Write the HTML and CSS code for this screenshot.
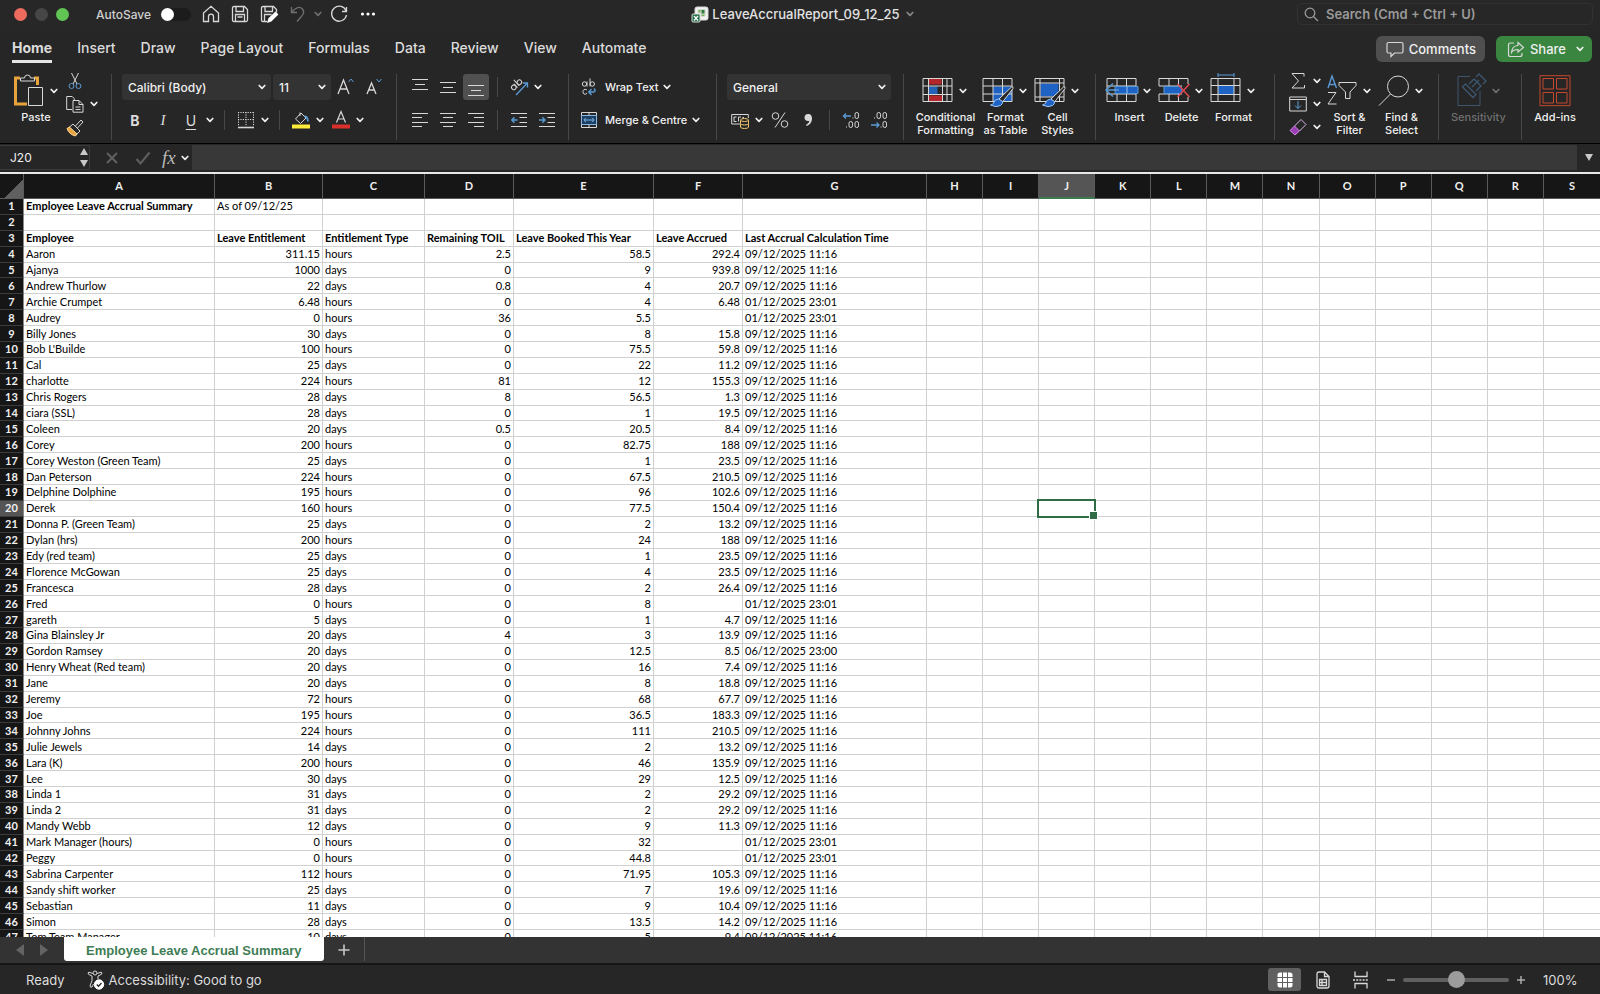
FILE: index.html
```html
<!DOCTYPE html>
<html lang="en">
<head>
  <meta charset="UTF-8" />
  <meta name="viewport" content="width=device-width, initial-scale=1.0"/>
  <title>LeaveAccrualReport_09_12_25</title>
  <link rel="stylesheet" href="styles.css">
</head>
<body>

  <!-- shared chevron -->
  <svg class="defs" width="0" height="0" aria-hidden="true">
    <symbol id="chev" viewBox="0 0 12 12"><path d="M3.2 4.5 6 7.4 8.8 4.5" fill="none" stroke="currentColor" stroke-width="1.7" stroke-linecap="round" stroke-linejoin="round"/></symbol>
  </svg>

  <header class="titlebar">
    <div class="title-left">
      <div class="lights"><span class="light red"></span><span class="light grey"></span><span class="light green"></span></div>
      <label class="autosave">AutoSave <input type="checkbox" class="switch"></label>
      <div class="quick">
        <button aria-label="Home"><svg width="18" height="18" viewBox="0 0 18 18"><path d="M1.5 8 9 1.3 16.5 8v8.500h-5V11.500c0-3.200-5-3.200-5 0v5h-5z"/></svg></button>
        <button aria-label="Save"><svg width="18" height="18" viewBox="0 0 18 18"><path d="M1.500 3q0-1.500 1.500-1.500h10.500l3 3v10.500q0 1.500-1.500 1.500h-12q-1.500 0-1.500-1.500zM5 1.500v5h7.500v-5M4.500 16.500v-7h9v7M6.500 12h5"/></svg></button>
        <button aria-label="Save as"><svg width="18" height="18" viewBox="0 0 18 18"><path d="M7 16.500h-4q-1.500 0-1.500-1.500v-12q0-1.500 1.500-1.500h10.500l3 3v3M5 1.500v5h7.500v-5M4.500 16v-6.500h7"/><path d="m8 17 1-3.500 6.500-6 2 2-6.500 6.500z" fill="#fff" stroke="#fff"/></svg></button>
        <button class="dim with-chev" aria-label="Undo"><svg width="18" height="18" viewBox="0 0 18 18"><path d="M2.500 2v5.500h5.500M2.500 7.500C7 1.500 11 1.500 13.500 4c2.500 3 .5 6-2 8.500L8 16.500"/></svg><svg class="chev"><use href="#chev"/></svg></button>
        <button aria-label="Redo"><svg width="18" height="18" viewBox="0 0 18 18"><path d="M16.500 2v4.500h-4.500M16.200 6.200A7.500 7.500 0 1 0 16.500 10"/></svg></button>
        <button aria-label="More"><svg width="18" height="18" viewBox="0 0 18 18"><g fill="#fff" stroke="none"><circle cx="3.500" cy="9" r="1.600"/><circle cx="9" cy="9" r="1.600"/><circle cx="14.500" cy="9" r="1.600"/></g></svg></button>
      </div>
    </div>
    <button class="doc-title">
      <svg width="16" height="16" viewBox="0 0 16 16"><rect x="3" y="1" width="13" height="13" rx="2" fill="#f0f4ee"/><path d="M6 3.500h7v7H9V7H6z" fill="#75b857"/><path d="M9 3.500h4V8H9z" fill="#2f7d3c"/><rect y="8" width="8" height="8" rx="1" fill="#1e7145"/><path d="m2 10 4 4.500m0-4.500-4 4.500" stroke="#fff" stroke-width="1.300"/></svg>
      <span>LeaveAccrualReport_09_12_25</span>
      <svg class="chev dim"><use href="#chev"/></svg>
    </button>
    <div class="title-right">
      <label class="search">
        <svg width="15" height="15" viewBox="0 0 15 15"><circle cx="6" cy="6" r="4.800"/><path d="m9.500 9.500 4.500 4.500"/></svg>
        <input type="text" placeholder="Search (Cmd + Ctrl + U)" aria-label="Search">
      </label>
    </div>
  </header>

  <nav class="menu">
    <a href="#" class="active">Home</a>
    <a href="#">Insert</a>
    <a href="#">Draw</a>
    <a href="#">Page Layout</a>
    <a href="#">Formulas</a>
    <a href="#">Data</a>
    <a href="#">Review</a>
    <a href="#">View</a>
    <a href="#">Automate</a>
    <div class="menu-actions">
      <button class="pill"><svg width="18" height="17" viewBox="0 0 18 17"><path d="M2.500 1.500h13q1.500 0 1.500 1.500v7.500q0 1.500-1.500 1.500H8.500l-3.500 3.500V12H2.500Q1 12 1 10.500V3q0-1.500 1.500-1.500z"/></svg>Comments</button>
      <button class="pill share"><svg width="18" height="17" viewBox="0 0 18 17"><path d="M7 2H3.500Q1.500 2 1.500 4v9.500q0 2 2 2H13q2 0 2-2V12M11 1.500l5.500 5-5.500 4.500V8.500Q6.500 8.300 4.500 11.500 4.800 5 11 4.500z"/></svg>Share<svg class="chev"><use href="#chev"/></svg></button>
    </div>
  </nav>

  <div class="ribbon">
    <section class="group g-clip">
      <button class="big">
        <span class="pic"><svg width="32" height="33" viewBox="0 0 32 33"><path d="M7 4H2.500v26H14M21 4h3.500v7" fill="none" stroke="#e8a33d" stroke-width="3"/><path d="M7.500 7V4h4q0-3 3-3t3 3h4v3z"/><path d="M15.500 13.500h14v18h-14z" fill="#262626"/></svg><svg class="chev"><use href="#chev"/></svg></span>
        Paste
      </button>
      <div class="stack">
        <button class="drop" aria-label="Cut"><svg width="18" height="18" viewBox="0 0 18 18"><path d="M5.500 1 11 12M12.500 1 7 12"/><g stroke="#5b9bd5"><circle cx="5.500" cy="14" r="2.500"/><circle cx="12.500" cy="14" r="2.500"/></g></svg></button>
        <button class="drop" aria-label="Copy"><svg width="18" height="18" viewBox="0 0 18 18"><path d="M6 14.500H.7V1.500h5.500l2 2V5M7 5.500h6l4 4v7.700H7zM13 5.500v4h4M9.500 12h5M9.500 14.500h5"/></svg><svg class="chev"><use href="#chev"/></svg></button>
        <button class="drop" aria-label="Format painter"><svg width="18" height="18" viewBox="0 0 18 18"><path d="m3 9.500 7.500 7L14 13 7 6z" fill="#262626"/><path d="M1 10.500 3.500 9l7.500 7-1.500 2Q3 16.500 1 10.500z" fill="#e8a33d" stroke="#ffd79a"/><path d="m9.500 8 5.500-6 2 2-5.500 6"/></svg></button>
      </div>
    </section>

    <section class="group g-font">
      <div class="row">
        <label class="combo font-name"><select aria-label="Font"><option>Calibri (Body)</option></select><svg class="chev"><use href="#chev"/></svg></label>
        <label class="combo font-size"><select aria-label="Font size"><option>11</option></select><svg class="chev"><use href="#chev"/></svg></label>
        <button class="tool" aria-label="Increase font size"><svg width="20" height="20" viewBox="0 0 20 20"><path d="m2 17 5.500-14L13 17M4 12h7" stroke-width="1.300"/><path d="m12.500 5 2.500-3 2.500 3" stroke="#5b9bd5"/></svg></button>
        <button class="tool" aria-label="Decrease font size"><svg width="20" height="20" viewBox="0 0 20 20"><path d="m3 17 4.500-11L12 17M4.700 13h5.600" stroke-width="1.300"/><path d="m12.500 2 2.500 3 2.500-3" stroke="#5b9bd5"/></svg></button>
      </div>
      <div class="row">
        <button class="tool letter bold">B</button>
        <button class="tool letter italic">I</button>
        <button class="drop"><span class="letter under">U</span><svg class="chev"><use href="#chev"/></svg></button>
        <span class="sep"></span>
        <button class="drop" aria-label="Borders"><svg width="18" height="18" viewBox="0 0 18 18"><path d="M1.500 1v14M16.500 1v14M9 1v14M1 1.500h16M1 8.500h16" stroke-dasharray="1.200 1.200"/><path d="M1 16.500h16" stroke-width="1.600"/></svg><svg class="chev"><use href="#chev"/></svg></button>
        <span class="sep"></span>
        <button class="drop" aria-label="Fill colour"><svg width="18" height="18" viewBox="0 0 18 18"><path d="m3.500 8 5.500-6 5 5-5.500 5.500zM8 5V1.500"/><path d="M12.500 5.500q3-.5 3.500 5" stroke="#5b9bd5" stroke-width="1.800"/><path d="M0 13.500h18v4H0z" fill="#ffeb3b" stroke="none"/></svg><svg class="chev"><use href="#chev"/></svg></button>
        <button class="drop" aria-label="Font colour"><svg width="18" height="18" viewBox="0 0 18 18"><path d="m4.500 11.500 4.500-11 4.500 11M6 8h6" stroke-width="1.200"/><path d="M0 13.500h18v4H0z" fill="#d9302c" stroke="none"/></svg><svg class="chev"><use href="#chev"/></svg></button>
      </div>
    </section>

    <section class="group g-align">
      <div class="row">
        <button class="tool" aria-label="Top align"><svg width="16" height="18" viewBox="0 0 16 18"><path d="M0 1.500h16M3 6.500h10M0 11.500h16"/></svg></button>
        <button class="tool" aria-label="Middle align"><svg width="16" height="18" viewBox="0 0 16 18"><path d="M0 4.500h16M3 9.500h10M0 14.500h16"/></svg></button>
        <button class="tool on" aria-label="Bottom align"><svg width="16" height="18" viewBox="0 0 16 18"><path d="M0 7.500h16M3 12.500h10M0 17.500h16"/></svg></button>
        <span class="sep"></span>
        <button class="drop" aria-label="Orientation"><svg width="19" height="18" viewBox="0 0 19 18"><g transform="rotate(-42 6 8)"><circle cx="3.500" cy="7.500" r="2.300"/><path d="M6 5v5.200M8.500 2v8.200"/><circle cx="11" cy="7.500" r="2.300"/></g><path d="M6 17 17.500 5M13 5h4.500v4.500" stroke="#5b9bd5" stroke-width="1.300"/></svg><svg class="chev"><use href="#chev"/></svg></button>
      </div>
      <div class="row">
        <button class="tool" aria-label="Align left"><svg width="16" height="16" viewBox="0 0 16 16"><path d="M0 1.500h16M0 5.500h10M0 10.500h16M0 14.500h10"/></svg></button>
        <button class="tool" aria-label="Centre"><svg width="16" height="16" viewBox="0 0 16 16"><path d="M0 1.500h16M3 5.500h10M0 10.500h16M3 14.500h10"/></svg></button>
        <button class="tool" aria-label="Align right"><svg width="16" height="16" viewBox="0 0 16 16"><path d="M0 1.500h16M6 5.500h10M0 10.500h16M6 14.500h10"/></svg></button>
        <span class="sep"></span>
        <button class="tool" aria-label="Decrease indent"><svg width="16" height="16" viewBox="0 0 16 16"><path d="M0 1.500h16M8.500 5.500H16M8.500 10.500H16M0 14.500h16"/><path d="M6.500 8H1M3.500 5.200.8 8l2.700 2.800" stroke="#5b9bd5" stroke-width="1.400"/></svg></button>
        <button class="tool" aria-label="Increase indent"><svg width="16" height="16" viewBox="0 0 16 16"><path d="M0 1.500h16M8.500 5.500H16M8.500 10.500H16M0 14.500h16"/><path d="M0 8h5.500M3.300 5.200 6 8l-2.700 2.800" stroke="#5b9bd5" stroke-width="1.400"/></svg></button>
      </div>
    </section>

    <section class="group g-wrap">
      <div class="row">
        <button class="wide"><svg width="18" height="18" viewBox="0 0 18 18"><circle cx="4.500" cy="6" r="2.200"/><path d="M7 3.500v5M10 .5v8M7 15.500q-4 2-4-1.700t4-1.900"/><circle cx="12.300" cy="6" r="2.200"/><path d="M14 10.500q2.500 3-.5 3.500H9M11.500 11 8.700 14l2.800 3" stroke="#5b9bd5" stroke-width="1.400"/></svg>Wrap Text<svg class="chev"><use href="#chev"/></svg></button>
      </div>
      <div class="row">
        <button class="wide"><svg width="18" height="18" viewBox="0 0 18 18"><path d="M1.500 1.500h15v15h-15zM9 1.500v3M9 13.500v3"/><path d="M1.500 4.500h15v9h-15z" fill="#1d3f60" stroke="#8ab8e6"/><path d="M4 9h10M6 6.800 3.800 9 6 11.200M12 6.800 14.200 9 12 11.200" stroke="#7db8ee"/></svg>Merge &amp; Centre<svg class="chev"><use href="#chev"/></svg></button>
      </div>
    </section>

    <section class="group g-number">
      <div class="row">
        <label class="combo num-format"><select aria-label="Number format"><option>General</option></select><svg class="chev"><use href="#chev"/></svg></label>
      </div>
      <div class="row">
        <button class="drop" aria-label="Accounting format"><svg width="18" height="18" viewBox="0 0 18 18"><path d="M9 13H.7V3.500h16.600V7M5.500 6H3v4.500h2.500M10 6H7.500v4.500M13 6.500h-1.500"/><g fill="#262626" stroke="#f2c66d"><path d="M9.500 9v7q0 1.500 4 1.500t4-1.500V9"/><ellipse cx="13.500" cy="9" rx="4" ry="1.500"/><path d="M9.500 12.500q0 1.500 4 1.500t4-1.500"/></g></svg><svg class="chev"><use href="#chev"/></svg></button>
        <button class="tool" aria-label="Percent style"><svg width="18" height="18" viewBox="0 0 18 18"><circle cx="4.500" cy="5" r="3.300"/><circle cx="13.500" cy="13" r="3.300"/><path d="M14 1.500 4 16.500"/></svg></button>
        <button class="tool" aria-label="Comma style"><svg width="18" height="18" viewBox="0 0 18 18"><path d="M9 3c3 0 4 2 4 4.500 0 4-2.500 6.500-5.500 7.500l-.5-1q3-1.500 3.500-4.200C7.500 10.500 5.500 9 5.500 6.500 5.500 4.500 7 3 9 3z" fill="#d8d8d8" stroke="none"/></svg></button>
        <span class="sep"></span>
        <button class="tool" aria-label="Increase decimal"><svg width="18" height="18" viewBox="0 0 18 18"><g><rect x="13" y="1.500" width="3.500" height="6" rx="1.700"/><rect x="7" y="10.500" width="3.500" height="6" rx="1.700"/><rect x="13" y="10.500" width="3.500" height="6" rx="1.700"/><path d="M4 16h1M10.500 7h1"/></g><path d="M9 5H1.500M4 2.500 1.500 5 4 7.500" stroke="#5b9bd5" stroke-width="1.300"/></svg></button>
        <button class="tool" aria-label="Decrease decimal"><svg width="18" height="18" viewBox="0 0 18 18"><g><rect x="7" y="1.500" width="3.500" height="6" rx="1.700"/><rect x="13" y="1.500" width="3.500" height="6" rx="1.700"/><rect x="13" y="10.500" width="3.500" height="6" rx="1.700"/><path d="M4 7h1M10.500 16h1"/></g><path d="M1 14h8M6.500 11.500 9 14l-2.500 2.500" stroke="#5b9bd5" stroke-width="1.300"/></svg></button>
      </div>
    </section>

    <section class="group g-styles">
      <button class="big cond">
        <span class="pic"><svg width="32" height="32" viewBox="0 0 32 32"><path d="M6.500 3.500h13v6h-13zM6.500 20.500h14v6h-14z" fill="#b3262b" stroke="none"/><path d="M6.500 11.500h9v8h-9z" fill="#2463b8" stroke="none"/><path d="M1 3.500h29v23H1zM1 11h29M1 19.500h29M6.500 3.500v23M20.500 3.500v23M25 3.500v23"/></svg><svg class="chev"><use href="#chev"/></svg></span>
        Conditional<br>Formatting
      </button>
      <button class="big">
        <span class="pic"><svg width="32" height="32" viewBox="0 0 32 32"><path d="M11 11.500h19v15H11z" fill="#1e63c4" stroke="none"/><path d="M1 3.500h29v23H1zM1 11h29M1 19h29M11 3.500v23M20.500 3.500v23"/><path d="M29.500 12 17 24l3.500 3L31 13.500q.5-2.500-1.500-1.500z" fill="#262626"/><path d="M16.500 24q-4 .5-5 4-1 2-3 2 6 3 10 .5 2.500-1.500 2-4z" fill="#1e63c4" stroke="#9cc8f5"/></svg><svg class="chev"><use href="#chev"/></svg></span>
        Format<br>as Table
      </button>
      <button class="big">
        <span class="pic"><svg width="32" height="32" viewBox="0 0 32 32"><path d="M6.500 8.500h18v13h-18z" fill="#1e63c4" stroke="none"/><path d="M1 3.500h29v23H1zM1 8h29M1 22h29M6 3.500v23M25.500 3.500v23"/><path d="M29.500 12 17 24l3.500 3L31 13.500q.5-2.500-1.500-1.500z" fill="#262626"/><path d="M16.500 24q-4 .5-5 4-1 2-3 2 6 3 10 .5 2.500-1.500 2-4z" fill="#1e63c4" stroke="#9cc8f5"/></svg><svg class="chev"><use href="#chev"/></svg></span>
        Cell<br>Styles
      </button>
    </section>

    <section class="group g-cells">
      <button class="big">
        <span class="pic"><svg width="32" height="32" viewBox="0 0 32 32"><path d="M1 3.500h29v23H1zM11 3.500v23M20.500 3.500v23M1 11h29M1 19h29"/><path d="M9 11.500h23v7H9z" fill="#1e63c4" stroke="#5b9bd5"/><path d="M21 11.500v7" stroke="#9cc8f5"/><path d="M13 15H0M7 8.500 0 15l7 6.500" stroke="#5b9bd5" stroke-width="1.400"/></svg><svg class="chev"><use href="#chev"/></svg></span>
        Insert
      </button>
      <button class="big">
        <span class="pic"><svg width="32" height="32" viewBox="0 0 32 32"><path d="M30 9V3.500H1V11h29M1 19h29v7.500H1V19M11 3.500v23M20.500 3.500v23"/><path d="M6 11.500h18v7H6z" fill="#1e63c4" stroke="#5b9bd5"/><path d="M24 10h8v12h-8z" fill="#262626" stroke="none"/><path d="m19.500 9 12 13M31.500 9l-12 13" stroke="#e0484d" stroke-width="1.500"/></svg><svg class="chev"><use href="#chev"/></svg></span>
        Delete
      </button>
      <button class="big">
        <span class="pic"><svg width="32" height="32" viewBox="0 0 32 32"><path d="M8 10.500h16v9H8z" fill="#1e63c4" stroke="none"/><path d="M1 3.500h29v23H1zM1 10.500h29M1 19.500h29M8 3.500v23M24 3.500v23"/><path d="M8 0h16M8-2v4M24-2v4" stroke="#5b9bd5"/></svg><svg class="chev"><use href="#chev"/></svg></span>
        Format
      </button>
    </section>

    <section class="group g-edit">
      <div class="stack">
        <button class="drop" aria-label="AutoSum"><svg width="18" height="18" viewBox="0 0 18 18"><path d="M15 4.500v-3H3L9.500 9 3 16h12.500v-3"/></svg><svg class="chev"><use href="#chev"/></svg></button>
        <button class="drop" aria-label="Fill"><svg width="18" height="18" viewBox="0 0 18 18"><path d="M.7 2h16.600v14H.7zM.7 4.500h16.600"/><path d="M9 6v7.500M6 10.500l3 3 3-3" stroke="#5b9bd5"/></svg><svg class="chev"><use href="#chev"/></svg></button>
        <button class="drop" aria-label="Clear"><svg width="18" height="18" viewBox="0 0 18 18"><path d="m5.500 8 6.500-6.500 5 5L10.500 13" stroke="#d9b8e8"/><path d="m1 12.500 4.500-4.500 5 5-4.500 4z" fill="#9b3fb5" stroke="#d38ae8"/></svg><svg class="chev"><use href="#chev"/></svg></button>
      </div>
      <button class="big">
        <span class="pic"><svg width="32" height="32" viewBox="0 0 32 32"><path d="M2 13 6 1l4.500 12M3.500 9.500H9" stroke="#5b9bd5" stroke-width="1.400"/><path d="M2 17.500h8L2 29h8.500M13 7.500h17v3l-6 6.500v6.500h-4.500V17L13 10.500z"/></svg><svg class="chev"><use href="#chev"/></svg></span>
        Sort &amp;<br>Filter
      </button>
      <button class="big">
        <span class="pic"><svg width="32" height="32" viewBox="0 0 32 32"><circle cx="20" cy="11.500" r="10.500"/><path d="M12.500 19 1 30.500"/></svg><svg class="chev"><use href="#chev"/></svg></span>
        Find &amp;<br>Select
      </button>
    </section>

    <section class="group g-sens">
      <button class="big" disabled>
        <span class="pic"><svg width="32" height="32" viewBox="0 0 32 32"><g stroke="#3c566e"><path d="M15 1.500H3v29h22V16"/><path d="m7.500 12 3-3L21 19.500l-3 3zM14 9l5-5 7 7-5 5M21 2l3-3 7 7-3 3M17 12l7-7" stroke-width="1.400"/></g></svg><svg class="chev"><use href="#chev"/></svg></span>
        Sensitivity
      </button>
    </section>

    <section class="group g-add">
      <button class="big">
        <span class="pic"><svg width="32" height="32" viewBox="0 0 32 32"><g stroke="#c4482c"><path d="M1 .7h30v30H1z"/><path d="M4 3.500h10.500V14H4zM17.500 3.500H28V14H17.500zM4 17.500h10.500V28H4zM17.500 17.500H28V28H17.500z"/></g></svg></span>
        Add-ins
      </button>
    </section>
  </div>

  <div class="formula-bar">
    <div class="name-box">
      <input type="text" value="J20" aria-label="Name box">
      <span class="spin"><i class="up"></i><i class="down"></i></span>
    </div>
    <div class="fx-tools">
      <button aria-label="Cancel"><svg width="16" height="16" viewBox="0 0 16 16"><path d="m3 3 10 10M13 3 3 13" stroke="#606060" stroke-width="2"/></svg></button>
      <button aria-label="Enter"><svg width="16" height="16" viewBox="0 0 16 16"><path d="m1.500 9 4 4.500 9-11" stroke="#606060" stroke-width="2"/></svg></button>
      <button class="fx"><span>fx</span><svg class="chev"><use href="#chev"/></svg></button>
    </div>
    <input type="text" class="formula" aria-label="Formula">
    <button class="expand" aria-label="Expand formula bar"><i class="down"></i></button>
  </div>

  <main class="sheet">
    <table id="grid">
      <colgroup>
        <col class="c-num"><col class="c-a"><col class="c-b"><col class="c-c"><col class="c-d"><col class="c-e"><col class="c-f"><col class="c-g">
        <col><col><col><col><col><col><col><col><col><col><col><col>
      </colgroup>
      <thead></thead>
      <tbody></tbody>
    </table>
  </main>

  <div class="sheet-tabs">
    <div class="arrows"><i class="left"></i><i class="right"></i></div>
    <button class="sheet-tab">Employee Leave Accrual Summary</button>
    <button class="add-sheet" aria-label="Add sheet"><svg width="12" height="12" viewBox="0 0 12 12"><path d="M6 .5v11M.5 6h11" stroke="#c8c8c8" stroke-width="1.600"/></svg></button>
  </div>

  <footer class="status">
    <span class="ready">Ready</span>
    <button class="access"><svg width="18" height="20" viewBox="0 0 18 20"><circle cx="8" cy="3" r="2"/><path d="M5.800 3.500 2 2.200Q.3 2.500 1.500 4.300L5 6v4.500L3 16q.3 2 2 1l1.500-3M10.200 3.500 14 2.200q1.700.3.500 2.100L11 6v3"/><circle cx="12" cy="14.500" r="4.700" fill="#fff" stroke="#fff"/><path d="m9.800 14.500 1.700 1.700 3-3.200" stroke="#262626" stroke-width="1.300"/></svg>Accessibility: Good to go</button>
    <div class="views">
      <button class="view on" aria-label="Normal"><svg width="16" height="16" viewBox="0 0 16 16"><rect x=".5" y=".5" width="15" height="15" rx="2.500" fill="#fff" stroke="none"/><path d="M5.500 0v16M10.500 0v16M0 5.500h16M0 10.500h16" stroke="#606060"/></svg></button>
      <button class="view" aria-label="Page layout"><svg width="14" height="18" viewBox="0 0 14 18"><path d="M3 1h5.500L13 5.500V15q0 2-2 2H3q-2 0-2-2V3q0-2 2-2zM8.500 1v4.500H13M3.500 8.500h7v6h-7zM3.500 11.500h7M6 8.500v6" stroke-width="1.300"/></svg></button>
      <button class="view" aria-label="Page break"><svg width="16" height="18" viewBox="0 0 16 18"><path d="M2 .5v5h12v-5M2 17.500v-5h12v5" stroke-width="1.300"/><path d="M0 9h16" stroke-dasharray="2 1.200" stroke-width="1.300"/></svg></button>
    </div>
    <div class="zoom">
      <button aria-label="Zoom out"><svg width="10" height="10" viewBox="0 0 10 10"><path d="M1 5h8" stroke="#aaa" stroke-width="1.500"/></svg></button>
      <input type="range" min="0" max="200" value="100" aria-label="Zoom">
      <button aria-label="Zoom in"><svg width="10" height="10" viewBox="0 0 10 10"><path d="M1 5h8M5 1v8" stroke="#aaa" stroke-width="1.500"/></svg></button>
      <span class="percent">100%</span>
    </div>
  </footer>

  <script src="script.js"></script>
</body>
</html>
```

FILE: styles.css
```css
* {
  box-sizing: border-box;
}

body {
  margin: 0;
  height: 100vh;
  display: flex;
  flex-direction: column;
  overflow: hidden;
  background: #262626;
  color: #f0f0f0;
  font-family: Inter, sans-serif;
  font-size: 12px;
}

button, input, select {
  font: inherit;
  color: inherit;
  background: none;
  border: none;
  border-radius: 0;
  padding: 0;
  margin: 0;
  outline: none;
}

svg {
  display: block;
  flex: none;
  overflow: visible;
  fill: none;
  stroke: #d8d8d8;
  stroke-width: 1;
}

.defs {
  position: absolute;
}

.chev {
  width: 12px;
  height: 12px;
  color: #f0f0f0;
  stroke: none;
}

.dim {
  color: #8a8a8a;
}

/* title bar */
.titlebar {
  flex: none;
  display: flex;
  align-items: center;
  height: 32px;
  padding-bottom: 4px;
  background: #272727;
}

.title-left,
.title-right {
  flex: 1;
  display: flex;
  align-items: center;
}

.title-right {
  justify-content: flex-end;
  padding-right: 7px;
}

.lights {
  display: flex;
  gap: 8px;
  padding-left: 14px;
}

.light {
  width: 13px;
  height: 13px;
  border-radius: 50%;
}

.red { background: #ec6a5e; }
.grey { background: #464646; }
.green { background: #61c554; }

.autosave {
  display: flex;
  align-items: center;
  gap: 10px;
  margin-left: 27px;
  font-weight: 500;
  color: #d0d0d0;
}

.switch {
  appearance: none;
  width: 30px;
  height: 13px;
  border-radius: 7px;
  background: #1c1c1c;
}

.switch::before {
  content: "";
  display: block;
  width: 13px;
  height: 13px;
  border-radius: 50%;
  background: #fff;
}

.quick {
  display: flex;
  align-items: center;
  gap: 11px;
  margin-left: 11px;
}

.quick svg {
  stroke-width: 1.3;
}

.with-chev {
  display: flex;
  align-items: center;
  gap: 5px;
  margin-right: -5px;
}

.with-chev svg {
  stroke: #707070;
}

.quick .chev,
.dim .chev {
  stroke: none;
  color: #707070;
}

.doc-title {
  display: flex;
  align-items: center;
  gap: 4px;
  margin-left: 15px;
  font-size: 13px;
  font-weight: 500;
  color: #e2e2e2;
}

.doc-title .dim {
  color: #8a8a8a;
}

.search {
  display: flex;
  align-items: center;
  gap: 7px;
  width: 296px;
  height: 22px;
  padding-left: 6px;
  border: 1px solid #323232;
  border-radius: 5px;
}

.search svg {
  stroke: #9a9a9a;
  stroke-width: 1.3;
}

.search input {
  flex: 1;
  font-size: 13px;
  font-weight: 600;
}

.search input::placeholder {
  color: #9a9a9a;
  opacity: 1;
}

/* tabs */
.menu {
  flex: none;
  display: flex;
  align-items: center;
  gap: 25px;
  height: 36px;
  padding: 0 8px 2px 12px;
  background: #262626;
  font-size: 14px;
  font-weight: 500;
}

.menu a {
  color: #dcdcdc;
  text-decoration: none;
  line-height: 24px;
  border-bottom: 3px solid transparent;
}

.menu a.active {
  font-weight: 700;
  border-bottom-color: #e6e6e6;
}

.menu-actions {
  margin-left: auto;
  display: flex;
  gap: 11px;
}

.pill {
  display: flex;
  align-items: center;
  gap: 5px;
  height: 26px;
  padding: 0 9px 0 10px;
  border-radius: 6px;
  background: #4f4f4f;
  font-size: 13px;
  font-weight: 500;
  color: #f0f0f0;
}

.pill svg {
  stroke-width: 1.2;
}

.pill.share {
  background: #3a8540;
  padding: 0 6px 0 11px;
}

.share .chev {
  stroke: none;
  margin-left: 3px;
}

/* ribbon */
.ribbon {
  flex: none;
  display: flex;
  height: 76px;
  padding: 6px 0 4px;
  background: #262626;
  border-bottom: 1px solid #000;
  font-size: 11px;
  font-weight: 500;
}

.group {
  flex: none;
  display: flex;
  border-right: 1px solid #484848;
  height: 66px;
  padding-left: 10px;
}

.g-clip { width: 112px; }
.g-font { width: 285px; }
.g-align { width: 172px; }
.g-wrap { width: 148px; padding-left: 11px; }
.g-number { width: 187px; }
.g-styles { width: 192px; gap: 5px; }
.g-cells { width: 179px; gap: 5px; }
.g-edit { width: 164px; gap: 5px; }
.g-sens { width: 83px; padding-left: 12px; }
.g-add { flex: 1; border: none; }

.g-font,
.g-align,
.g-wrap,
.g-number {
  flex-direction: column;
  gap: 7px;
}

.row {
  display: flex;
  align-items: center;
  gap: 2px;
  height: 26px;
}

.sep {
  width: 1px;
  height: 20px;
  margin: 0 6px;
  background: #484848;
}

.tool,
.drop {
  display: flex;
  align-items: center;
  justify-content: center;
  width: 26px;
  height: 26px;
}

.tool.on {
  background: #505050;
  border-radius: 3px;
}

.drop {
  width: 38px;
}

.drop > :first-child {
  margin: 0 auto;
}

.letter {
  font-size: 14px;
  font-weight: 400;
  color: #dcdcdc;
}

.bold {
  font-weight: 700;
}

.italic {
  font-family: "Liberation Serif", serif;
  font-style: italic;
  font-size: 15px;
}

.under {
  text-decoration: underline;
  text-underline-offset: 3px;
}

.combo {
  display: flex;
  align-items: center;
  height: 26px;
  padding-right: 3px;
  background: #333;
  border-radius: 3px;
  font-size: 12px;
}

.combo select {
  appearance: none;
  flex: 1;
  min-width: 0;
  padding-left: 6px;
}

.font-name { width: 149px; }
.font-size { width: 58px; }
.num-format { width: 164px; }

.wide {
  display: flex;
  align-items: center;
  gap: 7px;
}

.wide .chev {
  margin-left: -4px;
}

.big {
  display: flex;
  flex-direction: column;
  align-items: center;
  min-width: 46px;
  line-height: 13px;
}

.big .pic {
  display: flex;
  align-items: center;
  gap: 3px;
  height: 33px;
  margin-bottom: 4px;
}

.cond {
  width: 63px;
}

.g-clip .big {
  width: 52px;
}

.big:disabled,
.big:disabled .chev {
  color: #707070;
}

.stack {
  display: flex;
  flex-direction: column;
  gap: 10px;
}

.stack .drop {
  justify-content: flex-start;
  height: 13px;
}

.stack .drop > :first-child {
  margin: 0 4px;
}

.g-edit .stack {
  margin-right: -2px;
}

/* formula bar */
.formula-bar {
  flex: none;
  display: flex;
  align-items: stretch;
  height: 30px;
  padding: 1px 0 2px;
  background: #262626;
  border-bottom: 2px solid #e8e8e8;
}

.name-box {
  display: flex;
  align-items: center;
  width: 90px;
  padding: 0 1px 0 10px;
  border: 1px solid #3a3a3a;
  border-left: none;
}

.name-box input {
  flex: 1;
  min-width: 0;
}

.spin {
  display: flex;
  flex-direction: column;
  gap: 5px;
}

.up, .down {
  border: 4px solid transparent;
}

.up {
  border-top: none;
  border-bottom: 7px solid #c8c8c8;
}

.down {
  border-bottom: none;
  border-top: 7px solid #c8c8c8;
}

.fx-tools {
  display: flex;
  align-items: center;
  gap: 15px;
  padding-left: 14px;
}

.fx {
  display: flex;
  align-items: center;
  gap: 3px;
  margin: 0 1px 0 -4px;
  color: #b8b8b8;
  font-family: "Liberation Serif", serif;
  font-style: italic;
  font-size: 19px;
}

.formula {
  flex: 1;
  background: #383838;
}

.expand {
  display: flex;
  align-items: center;
  justify-content: center;
  width: 23px;
}

/* sheet */
.sheet {
  flex: 1;
  min-height: 0;
  overflow: hidden;
  background: #fff;
  color: #000;
  font-family: Lato, sans-serif;
  font-size: 11px;
}

#grid {
  width: 100%;
  height: 772px;
  table-layout: fixed;
  border-collapse: separate;
  border-spacing: 0;
}

.c-num { width: 24px; }
.c-a { width: 191px; }
.c-b { width: 108px; }
.c-c { width: 102px; }
.c-d { width: 89px; }
.c-e { width: 140px; }
.c-f { width: 89px; }
.c-g { width: 184px; }

#grid td,
#grid th {
  padding: 0 2px;
  line-height: 14px;
  white-space: nowrap;
  border-right: 1px solid #d0d0d0;
  border-bottom: 1px solid #d0d0d0;
}

#grid th {
  background: #161616;
  color: #f0f0f0;
  font-weight: 700;
  border-color: #5a5a5a;
}

#grid thead th {
  height: 25px;
}

#grid tbody th {
  padding: 0;
  border-color: #3c3c3c;
  border-right-color: #8a8a8a;
}

#grid tr > :last-child {
  border-right: none;
}

#grid .num {
  text-align: right;
}

#grid .strong td {
  font-weight: 700;
}

#grid th.current {
  background: #555;
}

#grid thead th.current {
  border-bottom: 2px solid #3c7a50;
}

#grid .corner {
  padding: 0;
  background: linear-gradient(135deg, #161616 60%, #606060 60%);
}

/* green frame and its fill handle lie over the gridlines */
.selected {
  position: relative;
}

.selected::before {
  content: "";
  position: absolute;
  inset: -2px;
  border: 2px solid #2f6b45;
}

.selected::after {
  content: "";
  position: absolute;
  right: -4px;
  bottom: -4px;
  width: 7px;
  height: 7px;
  background: #2f6b45;
  border: 1px solid #fff;
}

/* sheet tabs */
.sheet-tabs {
  flex: none;
  display: flex;
  height: 28px;
  background: #333;
  border-bottom: 2px solid #161616;
}

.arrows {
  display: flex;
  align-items: center;
  gap: 16px;
  width: 64px;
  padding-left: 16px;
}

.left, .right {
  border: 6px solid transparent;
}

.left {
  border-left: none;
  border-right: 8px solid #636363;
}

.right {
  border-right: none;
  border-left: 8px solid #636363;
}

.sheet-tab {
  height: 24px;
  padding: 3px 22px 0;
  background: #fff;
  border-radius: 0 0 3px 3px;
  color: #3e7d54;
  font-family: "Liberation Sans", sans-serif;
  font-size: 13px;
  font-weight: 700;
}

.add-sheet {
  display: flex;
  align-items: center;
  justify-content: center;
  width: 41px;
  height: 24px;
  padding-top: 2px;
  border-right: 1px solid #555;
}

/* status bar */
.status {
  flex: none;
  display: flex;
  align-items: center;
  height: 29px;
  padding: 0 22px 0 26px;
  color: #dcdcdc;
  font-size: 13px;
}

.access {
  display: flex;
  align-items: center;
  gap: 4px;
  margin-left: 22px;
}

.views {
  margin-left: auto;
  display: flex;
  gap: 5px;
}

.view {
  display: flex;
  align-items: center;
  justify-content: center;
  width: 33px;
  height: 23px;
}

.view.on {
  background: #606060;
  border-radius: 3px;
}

.zoom {
  display: flex;
  align-items: center;
  gap: 7px;
  margin-left: 9px;
}

.zoom input {
  appearance: none;
  width: 106px;
  height: 4px;
  border-radius: 2px;
  background: #606060;
}

.zoom input::-webkit-slider-thumb {
  appearance: none;
  width: 17px;
  height: 17px;
  border-radius: 50%;
  background: #9c9c9c;
}

.percent {
  width: 35px;
  margin-left: 10px;
}
```

FILE: script.js
```js
const columns = "ABCDEFGHIJKLMNOPQRS".split("");
const a = "09/12/2025 11:16";
const b = "01/12/2025 23:01";

// name, entitlement, type, TOIL, booked, accrued, last calculation
const rows = [
  ["Employee Leave Accrual Summary", "As of 09/12/25"],
  [],
  ["Employee", "Leave Entitlement", "Entitlement Type", "Remaining TOIL", "Leave Booked This Year", "Leave Accrued", "Last Accrual Calculation Time"],
  ["Aaron", 311.15, "hours", 2.5, 58.5, 292.4, a],
  ["Ajanya", 1000, "days", 0, 9, 939.8, a],
  ["Andrew Thurlow", 22, "days", 0.8, 4, 20.7, a],
  ["Archie Crumpet", 6.48, "hours", 0, 4, 6.48, b],
  ["Audrey", 0, "hours", 36, 5.5, "", b],
  ["Billy Jones", 30, "days", 0, 8, 15.8, a],
  ["Bob L'Builde", 100, "hours", 0, 75.5, 59.8, a],
  ["Cal", 25, "days", 0, 22, 11.2, a],
  ["charlotte", 224, "hours", 81, 12, 155.3, a],
  ["Chris Rogers", 28, "days", 8, 56.5, 1.3, a],
  ["ciara (SSL)", 28, "days", 0, 1, 19.5, a],
  ["Coleen", 20, "days", 0.5, 20.5, 8.4, a],
  ["Corey", 200, "hours", 0, 82.75, 188, a],
  ["Corey Weston (Green Team)", 25, "days", 0, 1, 23.5, a],
  ["Dan Peterson", 224, "hours", 0, 67.5, 210.5, a],
  ["Delphine Dolphine", 195, "hours", 0, 96, 102.6, a],
  ["Derek", 160, "hours", 0, 77.5, 150.4, a],
  ["Donna P. (Green Team)", 25, "days", 0, 2, 13.2, a],
  ["Dylan (hrs)", 200, "hours", 0, 24, 188, a],
  ["Edy (red team)", 25, "days", 0, 1, 23.5, a],
  ["Florence McGowan", 25, "days", 0, 4, 23.5, a],
  ["Francesca", 28, "days", 0, 2, 26.4, a],
  ["Fred", 0, "hours", 0, 8, "", b],
  ["gareth", 5, "days", 0, 1, 4.7, a],
  ["Gina Blainsley Jr", 20, "days", 4, 3, 13.9, a],
  ["Gordon Ramsey", 20, "days", 0, 12.5, 8.5, "06/12/2025 23:00"],
  ["Henry Wheat (Red team)", 20, "days", 0, 16, 7.4, a],
  ["Jane", 20, "days", 0, 8, 18.8, a],
  ["Jeremy", 72, "hours", 0, 68, 67.7, a],
  ["Joe", 195, "hours", 0, 36.5, 183.3, a],
  ["Johnny Johns", 224, "hours", 0, 111, 210.5, a],
  ["Julie Jewels", 14, "days", 0, 2, 13.2, a],
  ["Lara (K)", 200, "hours", 0, 46, 135.9, a],
  ["Lee", 30, "days", 0, 29, 12.5, a],
  ["Linda 1", 31, "days", 0, 2, 29.2, a],
  ["Linda 2", 31, "days", 0, 2, 29.2, a],
  ["Mandy Webb", 12, "days", 0, 9, 11.3, a],
  ["Mark Manager (hours)", 0, "hours", 0, 32, "", b],
  ["Peggy", 0, "hours", 0, 44.8, "", b],
  ["Sabrina Carpenter", 112, "hours", 0, 71.95, 105.3, a],
  ["Sandy shift worker", 25, "days", 0, 7, 19.6, a],
  ["Sebastian", 11, "days", 0, 9, 10.4, a],
  ["Simon", 28, "days", 0, 13.5, 14.2, a],
  ["Tom Team Manager", 10, "days", 0, 5, 9.4, a]
];

const table = document.getElementById("grid");

const head = table.tHead.insertRow();
head.innerHTML = '<th class="corner"></th>' +
  columns.map(c => `<th${c === "J" ? ' class="current"' : ""}>${c}</th>`).join("");

rows.forEach((row, i) => {
  const tr = table.tBodies[0].insertRow();
  if (i === 2) tr.className = "strong";

  const th = document.createElement("th");
  th.textContent = i + 1;
  if (i === 19) th.className = "current";
  tr.appendChild(th);

  columns.forEach((c, j) => {
    const td = tr.insertCell();
    const value = row[j];
    if (value !== undefined) td.textContent = value;
    if (typeof value === "number") td.className = "num";
    if (i === 0 && j === 0) td.innerHTML = `<b>${value}</b>`;
    if (i === 19 && c === "J") td.className = "selected";
  });
});
```
